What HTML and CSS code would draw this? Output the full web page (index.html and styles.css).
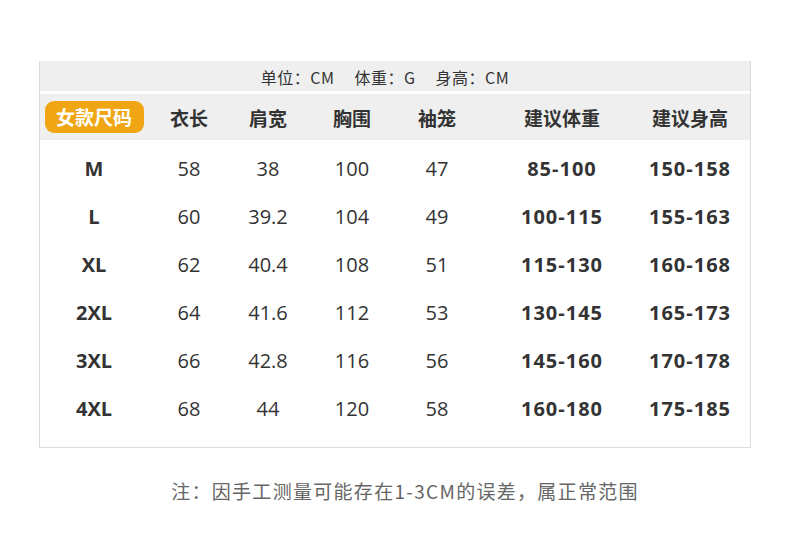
FILE: index.html
```html
<!DOCTYPE html>
<html lang="zh">
<head>
<meta charset="utf-8">
<link rel="stylesheet" href="styles.css">
</head>
<body>
<div class="page">
  <div class="chart">
    <div class="units"><span>单位：CM</span><span>体重：G</span><span>身高：CM</span></div>
    <div class="row head">
      <div class="cell"><span class="badge">女款尺码</span></div>
      <div class="cell">衣长</div>
      <div class="cell">肩宽</div>
      <div class="cell">胸围</div>
      <div class="cell">袖笼</div>
      <div class="cell">建议体重</div>
      <div class="cell">建议身高</div>
    </div>
    <div class="body">
      <div class="row"><div class="cell b">M</div><div class="cell">58</div><div class="cell">38</div><div class="cell">100</div><div class="cell">47</div><div class="cell b n">85-100</div><div class="cell b n">150-158</div></div>
      <div class="row"><div class="cell b">L</div><div class="cell">60</div><div class="cell">39.2</div><div class="cell">104</div><div class="cell">49</div><div class="cell b n">100-115</div><div class="cell b n">155-163</div></div>
      <div class="row"><div class="cell b">XL</div><div class="cell">62</div><div class="cell">40.4</div><div class="cell">108</div><div class="cell">51</div><div class="cell b n">115-130</div><div class="cell b n">160-168</div></div>
      <div class="row"><div class="cell b">2XL</div><div class="cell">64</div><div class="cell">41.6</div><div class="cell">112</div><div class="cell">53</div><div class="cell b n">130-145</div><div class="cell b n">165-173</div></div>
      <div class="row"><div class="cell b">3XL</div><div class="cell">66</div><div class="cell">42.8</div><div class="cell">116</div><div class="cell">56</div><div class="cell b n">145-160</div><div class="cell b n">170-178</div></div>
      <div class="row"><div class="cell b">4XL</div><div class="cell">68</div><div class="cell">44</div><div class="cell">120</div><div class="cell">58</div><div class="cell b n">160-180</div><div class="cell b n">175-185</div></div>
    </div>
  </div>
  <div class="note">注：因手工测量可能存在1-3CM的误差，属正常范围</div>
</div>
</body>
</html>
```

FILE: styles.css
```css
html, body {
  margin: 0;
  padding: 0;
  background: #ffffff;
}
body {
  font-family: "Open Sans", "Noto Sans CJK SC", sans-serif;
  color: #333333;
}
.page {
  width: 790px;
  height: 540px;
  padding-top: 61px;
  box-sizing: border-box;
}
.chart {
  margin-left: 39px;
  width: 712px;
  box-sizing: border-box;
  border: 1px solid #dcdcdc;
  border-top: none;
}
.units {
  height: 30px;
  background: #efefef;
  font-size: 16px;
  line-height: 32px;
  display: flex;
  justify-content: center;
  gap: 20px;
  padding-right: 20px;
  font-family: "Noto Sans CJK SC", sans-serif;
  color: #333;
  margin-bottom: 3px;
  letter-spacing: 0.5px;
}
.row {
  display: grid;
  grid-template-columns: 108px 82px 76px 92px 78px 172px 84px 1fr;
  align-items: center;
}
.head {
  height: 46px;
  background: #efefef;
  font-family: "Noto Sans CJK SC", sans-serif;
  font-weight: 700;
  font-size: 19px;
}
.cell {
  text-align: center;
  white-space: nowrap;
}
.badge {
  display: inline-block;
  width: 99px;
  height: 32px;
  line-height: 32px;
  background: #f0a515;
  color: #ffffff;
  border-radius: 9px;
  font-size: 19px;
}
.body {
  padding-top: 4px;
  padding-bottom: 15px;
}
.body .row {
  height: 48px;
  font-size: 20px;
}
.b {
  font-weight: 700;
}
.n {
  letter-spacing: 1px;
}
.note {
  margin-top: 29px;
  text-align: center;
  font-family: "Noto Sans CJK SC", sans-serif;
  font-size: 19px;
  color: #666666;
  padding-left: 20px;
  letter-spacing: 1.3px;
}
```
